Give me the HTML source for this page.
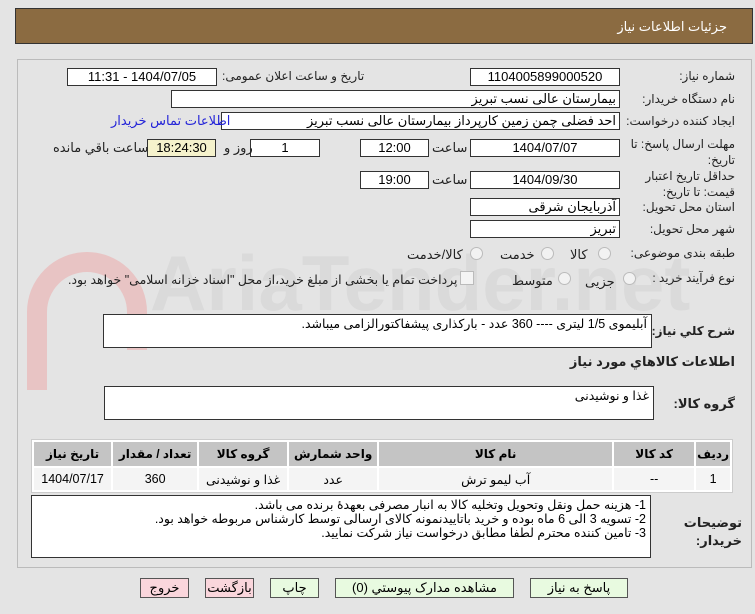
<!DOCTYPE html>
<html><head><meta charset="utf-8"><style>
body{margin:0;width:755px;height:614px;background:#e4e4e4;font-family:"Liberation Sans","DejaVu Sans",sans-serif;font-size:12px;position:relative;overflow:hidden;direction:rtl}
.a{position:absolute;white-space:nowrap}
.in{position:absolute;background:#fff;border:1px solid #333;box-sizing:border-box;height:18px;line-height:16px;text-align:center;font-size:13px}
.l{position:absolute;white-space:nowrap;font-size:12px;color:#222}
.ta{position:absolute;background:#fff;border:1px solid #333;box-sizing:border-box;padding:2px 4px;font-size:12.5px;line-height:14px}
.rad{position:absolute;width:11px;height:11px;border:1px solid #bbb;border-radius:50%;background:#f2f2f2}
table{position:absolute;border-collapse:separate;border-spacing:2px;left:31px;top:439px;width:702px;background:#fff;border:1px solid #ccc}
th{background:#c4c4c4;height:22px;font-size:12px}
td{background:#f4f4f4;height:20px;text-align:center;font-size:12.5px}
.btn{position:absolute;top:578px;height:20px;box-sizing:border-box;border:1px solid #555;text-align:center;line-height:18px;font-size:13px}
</style></head><body>
<div class="a" style="left:15px;top:8px;width:738px;height:36px;background:#8b6b41;border:1px solid #333;box-sizing:border-box"></div>
<div class="a" style="right:28px;top:19px;color:#fff;font-size:13px">جزئیات اطلاعات نیاز</div>
<div class="a" style="left:17px;top:59px;width:735px;height:509px;border:1px solid #bbb;box-sizing:border-box"></div>
<svg class="a" style="left:15px;top:250px" width="140" height="140"><path d="M22 140 L22 62 A50 50 0 0 1 122 62 L122 100" fill="none" stroke="#e8c4c4" stroke-width="20"/></svg>
<div class="a" style="left:150px;top:238px;font-size:78px;font-weight:bold;color:rgba(150,150,150,0.12);direction:ltr">AriaTender.net</div>

<div class="l" style="right:20px;top:69px">شماره نیاز:</div>
<div class="in" style="left:470px;top:68px;width:150px">1104005899000520</div>
<div class="l" style="left:222px;top:69px">تاریخ و ساعت اعلان عمومی:</div>
<div class="in" style="left:67px;top:68px;width:150px">1404/07/05 - 11:31</div>

<div class="l" style="right:20px;top:92px">نام دستگاه خریدار:</div>
<div class="in" style="left:171px;top:90px;width:449px;text-align:right;padding-right:3px">بیمارستان عالی نسب تبریز</div>

<div class="l" style="right:20px;top:114px">ایجاد کننده درخواست:</div>
<div class="in" style="left:221px;top:112px;width:399px;text-align:right;padding-right:3px">احد فضلی چمن زمین کارپرداز  بیمارستان عالی نسب تبریز</div>
<div class="l" style="left:111px;top:113px;color:#2424d8;font-size:13px">اطلاعات تماس خریدار</div>

<div class="l" style="right:20px;top:136px;line-height:16px;text-align:right">مهلت ارسال پاسخ: تا<br>تاریخ:</div>
<div class="in" style="left:470px;top:139px;width:150px">1404/07/07</div>
<div class="l" style="left:432px;top:140px;font-size:13px">ساعت</div>
<div class="in" style="left:360px;top:139px;width:69px">12:00</div>
<div class="in" style="left:250px;top:139px;width:70px">1</div>
<div class="l" style="left:224px;top:140px;font-size:13px">روز و</div>
<div class="in" style="left:147px;top:139px;width:69px;background:#f5f2cc">18:24:30</div>
<div class="l" style="left:53px;top:140px;font-size:13px">ساعت باقي مانده</div>

<div class="l" style="right:20px;top:168px;line-height:16px;text-align:right">حداقل تاریخ اعتبار<br>قیمت: تا تاریخ:</div>
<div class="in" style="left:470px;top:171px;width:150px">1404/09/30</div>
<div class="l" style="left:432px;top:172px;font-size:13px">ساعت</div>
<div class="in" style="left:360px;top:171px;width:69px">19:00</div>

<div class="l" style="right:20px;top:200px">استان محل تحویل:</div>
<div class="in" style="left:470px;top:198px;width:150px;text-align:right;padding-right:3px">آذربایجان شرقی</div>
<div class="l" style="right:20px;top:222px">شهر محل تحویل:</div>
<div class="in" style="left:470px;top:220px;width:150px;text-align:right;padding-right:3px">تبریز</div>

<div class="l" style="right:20px;top:246px">طبقه بندی موضوعی:</div>
<div class="rad" style="left:598px;top:247px"></div>
<div class="l" style="left:570px;top:247px;font-size:13px">کالا</div>
<div class="rad" style="left:541px;top:247px"></div>
<div class="l" style="left:500px;top:247px;font-size:13px">خدمت</div>
<div class="rad" style="left:470px;top:247px"></div>
<div class="l" style="left:407px;top:247px;font-size:13px">کالا/خدمت</div>

<div class="l" style="right:20px;top:271px">نوع فرآیند خرید :</div>
<div class="rad" style="left:623px;top:272px"></div>
<div class="l" style="left:585px;top:274px;font-size:13px">جزیی</div>
<div class="rad" style="left:558px;top:272px"></div>
<div class="l" style="left:512px;top:273px;font-size:13px">متوسط</div>
<div class="a" style="left:460px;top:271px;width:12px;height:12px;border:1px solid #bbb;background:#f4f4f4"></div>
<div class="l" style="left:68px;top:272px;font-size:12.5px">پرداخت تمام یا بخشی از مبلغ خرید،از محل "اسناد خزانه اسلامی" خواهد بود.</div>

<div class="l" style="right:20px;top:324px;font-weight:bold">شرح كلي نياز:</div>
<div class="ta" style="left:103px;top:314px;width:549px;height:34px">آبلیموی 1/5 لیتری ---- 360 عدد - بارکذاری پیشفاکتورالزامی میباشد.</div>
<div class="l" style="right:20px;top:354px;font-weight:bold;font-size:13px">اطلاعات كالاهاي مورد نياز</div>
<div class="l" style="right:20px;top:396px;font-weight:bold;font-size:13px">گروه کالا:</div>
<div class="ta" style="left:104px;top:386px;width:550px;height:34px">غذا و نوشیدنی</div>

<table><tr><th style="width:20px">ردیف</th><th style="width:78px">کد کالا</th><th style="width:231px">نام کالا</th><th style="width:86px">واحد شمارش</th><th style="width:86px">گروه کالا</th><th style="width:82px">تعداد / مقدار</th><th>تاریخ نیاز</th></tr>
<tr><td>1</td><td>--</td><td>آب لیمو ترش</td><td>عدد</td><td>غذا و نوشیدنی</td><td>360</td><td>1404/07/17</td></tr></table>

<div class="l" style="right:13px;top:514px;font-weight:bold;font-size:13px;line-height:18px;text-align:right">توضیحات<br>خریدار:</div>
<div class="ta" style="left:31px;top:495px;width:620px;height:63px;line-height:14px">1- هزینه حمل ونقل وتحویل وتخلیه کالا به انبار مصرفی بعهدهٔ برنده می باشد.<br>2- تسویه 3 الی 6 ماه بوده و خرید باتاییدنمونه کالای ارسالی توسط کارشناس مربوطه خواهد بود.<br>3- تامین کننده محترم لطفا مطابق درخواست نیاز شرکت نمایید.</div>

<div class="btn" style="left:530px;width:98px;background:#e8fae0">پاسخ به نیاز</div>
<div class="btn" style="left:335px;width:179px;background:#e8fae0">مشاهده مدارک پیوستي (0)</div>
<div class="btn" style="left:270px;width:49px;background:#e8fae0">چاپ</div>
<div class="btn" style="left:205px;width:49px;background:#fad6dc">بازگشت</div>
<div class="btn" style="left:140px;width:49px;background:#fad6dc">خروج</div>
</body></html>
